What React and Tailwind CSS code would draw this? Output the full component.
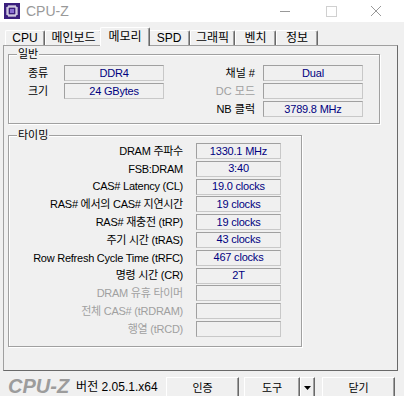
const tabs = [
  { name: 'CPU', w: 'w-[40px]' },
  { name: '메인보드', w: 'w-[57px]' },
  { name: '메모리', w: 'w-[50px]', active: true },
  { name: 'SPD', w: 'w-[42px]' },
  { name: '그래픽', w: 'w-[45px]' },
  { name: '벤치', w: 'w-[41px]' },
  { name: '정보', w: 'w-[42px]' },
];

const timings = [
  ['DRAM 주파수', '1330.1 MHz'],
  ['FSB:DRAM', '3:40'],
  ['CAS# Latency (CL)', '19.0 clocks'],
  ['RAS# 에서의 CAS# 지연시간', '19 clocks'],
  ['RAS# 재충전 (tRP)', '19 clocks'],
  ['주기 시간 (tRAS)', '43 clocks'],
  ['Row Refresh Cycle Time (tRFC)', '467 clocks'],
  ['명령 시간 (CR)', '2T'],
  ['DRAM 유휴 타이머', '', true],
  ['전체 CAS# (tRDRAM)', '', true],
  ['행열 (tRCD)', '', true],
];

const Field = ({ value, w }) => (
  <div
    className={`${w} h-[16px] border border-t-[#a0a0a0] border-l-[#a0a0a0] border-b-[#c8c8c8] border-r-[#c8c8c8] flex items-center justify-center text-[#000080] leading-none tracking-[-0.2px]`}
  >
    {value}
  </div>
);

const Group = ({ title, className, children }) => (
  <div
    className={`relative border border-[#a0a0a0] shadow-[inset_1px_1px_0_#fff,1px_1px_0_#fff] ${className}`}
  >
    <span className="absolute left-[8px] top-[-7px] px-[1px] bg-[#f0f0f0] leading-[13px]">
      {title}
    </span>
    {children}
  </div>
);

const Button = ({ children, w }) => (
  <div
    className={`${w} h-[22px] border border-t-white border-l-white border-r-[#696969] border-b-[#696969] shadow-[inset_-1px_-1px_0_#a0a0a0] flex items-center justify-center leading-none`}
  >
    {children}
  </div>
);

export default function App() {
  return (
    <div className="w-[404px] h-[396px] overflow-hidden bg-[#f0f0f0] flex flex-col text-[11px] text-black font-['Liberation_Sans','Noto_Sans_CJK_KR',sans-serif]">
      {/* title bar */}
      <div className="h-[22px] bg-white flex items-center shrink-0">
        <svg width="16" height="16" viewBox="0 0 16 16" className="ml-[4px]">
          <rect x="0" y="0" width="16" height="16" fill="#3a1f7d" />
          <rect x="4" y="4" width="8" height="8" fill="none" stroke="#fff" strokeWidth="1" />
          <rect x="6" y="6" width="4" height="4" fill="#8a6fd0" />
          <path d="M5 2v2M7 2v2M9 2v2M11 2v2M5 12v2M7 12v2M9 12v2M11 12v2M2 5h2M2 7h2M2 9h2M2 11h2M12 5h2M12 7h2M12 9h2M12 11h2" stroke="#fff" strokeWidth="1" />
        </svg>
        <span className="ml-[6px] text-[14px] text-[#999]">CPU-Z</span>
        <div className="ml-auto flex items-center h-full">
          <svg width="12" height="12" viewBox="0 0 12 12" className="mr-[34px]">
            <path d="M1 6.5h10" stroke="#999" strokeWidth="1" />
          </svg>
          <svg width="12" height="12" viewBox="0 0 12 12" className="mr-[33px]">
            <rect x="1.5" y="1.5" width="10" height="10" fill="none" stroke="#d0d0d0" strokeWidth="1" />
          </svg>
          <svg width="12" height="12" viewBox="0 0 12 12" className="mr-[22px]">
            <path d="M1 1l10 10M11 1L1 11" stroke="#999" strokeWidth="1" />
          </svg>
        </div>
      </div>

      {/* tabs */}
      <div className="h-[23px] flex items-end pl-[5px] shrink-0">
        {tabs.map((t) =>
          t.active ? (
            <div
              key={t.name}
              className={`${t.w} -mx-[2px] h-[19px] -mb-px relative z-10 bg-[#f0f0f0] border-t border-l border-r border-t-white border-l-white border-r-[#696969] shadow-[inset_-1px_0_0_#a0a0a0] rounded-t-[2px] flex items-center justify-center text-[12px] leading-none pb-[1px]`}
            >
              {t.name}
            </div>
          ) : (
            <div
              key={t.name}
              className={`${t.w} h-[15px] border-t border-l border-r border-t-white border-l-white border-r-[#696969] shadow-[inset_-1px_0_0_#a0a0a0] rounded-t-[2px] flex items-center justify-center text-[12px] leading-none`}
            >
              {t.name}
            </div>
          )
        )}
      </div>

      {/* panel */}
      <div className="ml-[3px] w-[395px] h-[326px] shrink-0 border border-t-[#a0a0a0] border-l-[#a0a0a0] border-r-[#696969] border-b-[#696969] pt-[8px] pl-[4px]">
        <Group title="일반" className="w-[372px] h-[70px] pt-[10px]">
          <div className="flex flex-col gap-[2px]">
            <div className="flex items-center h-[16px]">
              <span className="w-[36px] pl-[19px] box-content">종류</span>
              <Field value="DDR4" w="w-[100px]" />
              <span className="w-[99px] text-right pr-[8px] box-border">채널 #</span>
              <Field value="Dual" w="w-[100px]" />
            </div>
            <div className="flex items-center h-[16px]">
              <span className="w-[36px] pl-[19px] box-content">크기</span>
              <Field value="24 GBytes" w="w-[100px]" />
              <span className="w-[99px] text-right pr-[8px] box-border text-[#a0a0a0]">DC 모드</span>
              <Field value="" w="w-[100px]" />
            </div>
            <div className="flex items-center h-[16px]">
              <span className="w-[36px] pl-[19px] box-content"></span>
              <span className="w-[100px]"></span>
              <span className="w-[99px] text-right pr-[8px] box-border">NB 클럭</span>
              <Field value="3789.8 MHz" w="w-[100px]" />
            </div>
          </div>
        </Group>

        <Group title="타이밍" className="mt-[11px] w-[294px] h-[212px] pt-[7px]">
          <div className="flex flex-col gap-[1.8px]">
            {timings.map(([label, value, disabled]) => (
              <div key={label} className="flex items-center h-[16px]">
                <span
                  className={`w-[174px] text-right whitespace-nowrap tracking-[-0.25px] ${disabled ? 'text-[#a0a0a0]' : ''}`}
                >
                  {label}
                </span>
                <span className="w-[13px]"></span>
                <Field value={value} w="w-[85px]" />
              </div>
            ))}
          </div>
        </Group>
      </div>

      {/* bottom bar */}
      <div className="flex items-start pt-[6px] shrink-0">
        <span className="ml-[8px] mt-[-3px] text-[20px] font-bold italic text-[#9c9c9c] leading-[24px]">
          CPU-Z
        </span>
        <span className="ml-[7px] text-[12px] leading-[20px]">버전 2.05.1.x64</span>
        <div className="ml-auto mr-[9px] flex">
          <Button w="w-[73px]">인증</Button>
          <div className="ml-[5px] flex">
            <Button w="w-[56px]">도구</Button>
            <Button w="w-[15px]">
              <svg width="7" height="4" viewBox="0 0 7 4">
                <path d="M0 0h7L3.5 4z" fill="#000" />
              </svg>
            </Button>
          </div>
          <div className="ml-[7px]">
            <Button w="w-[73px]">닫기</Button>
          </div>
        </div>
      </div>
    </div>
  );
}
